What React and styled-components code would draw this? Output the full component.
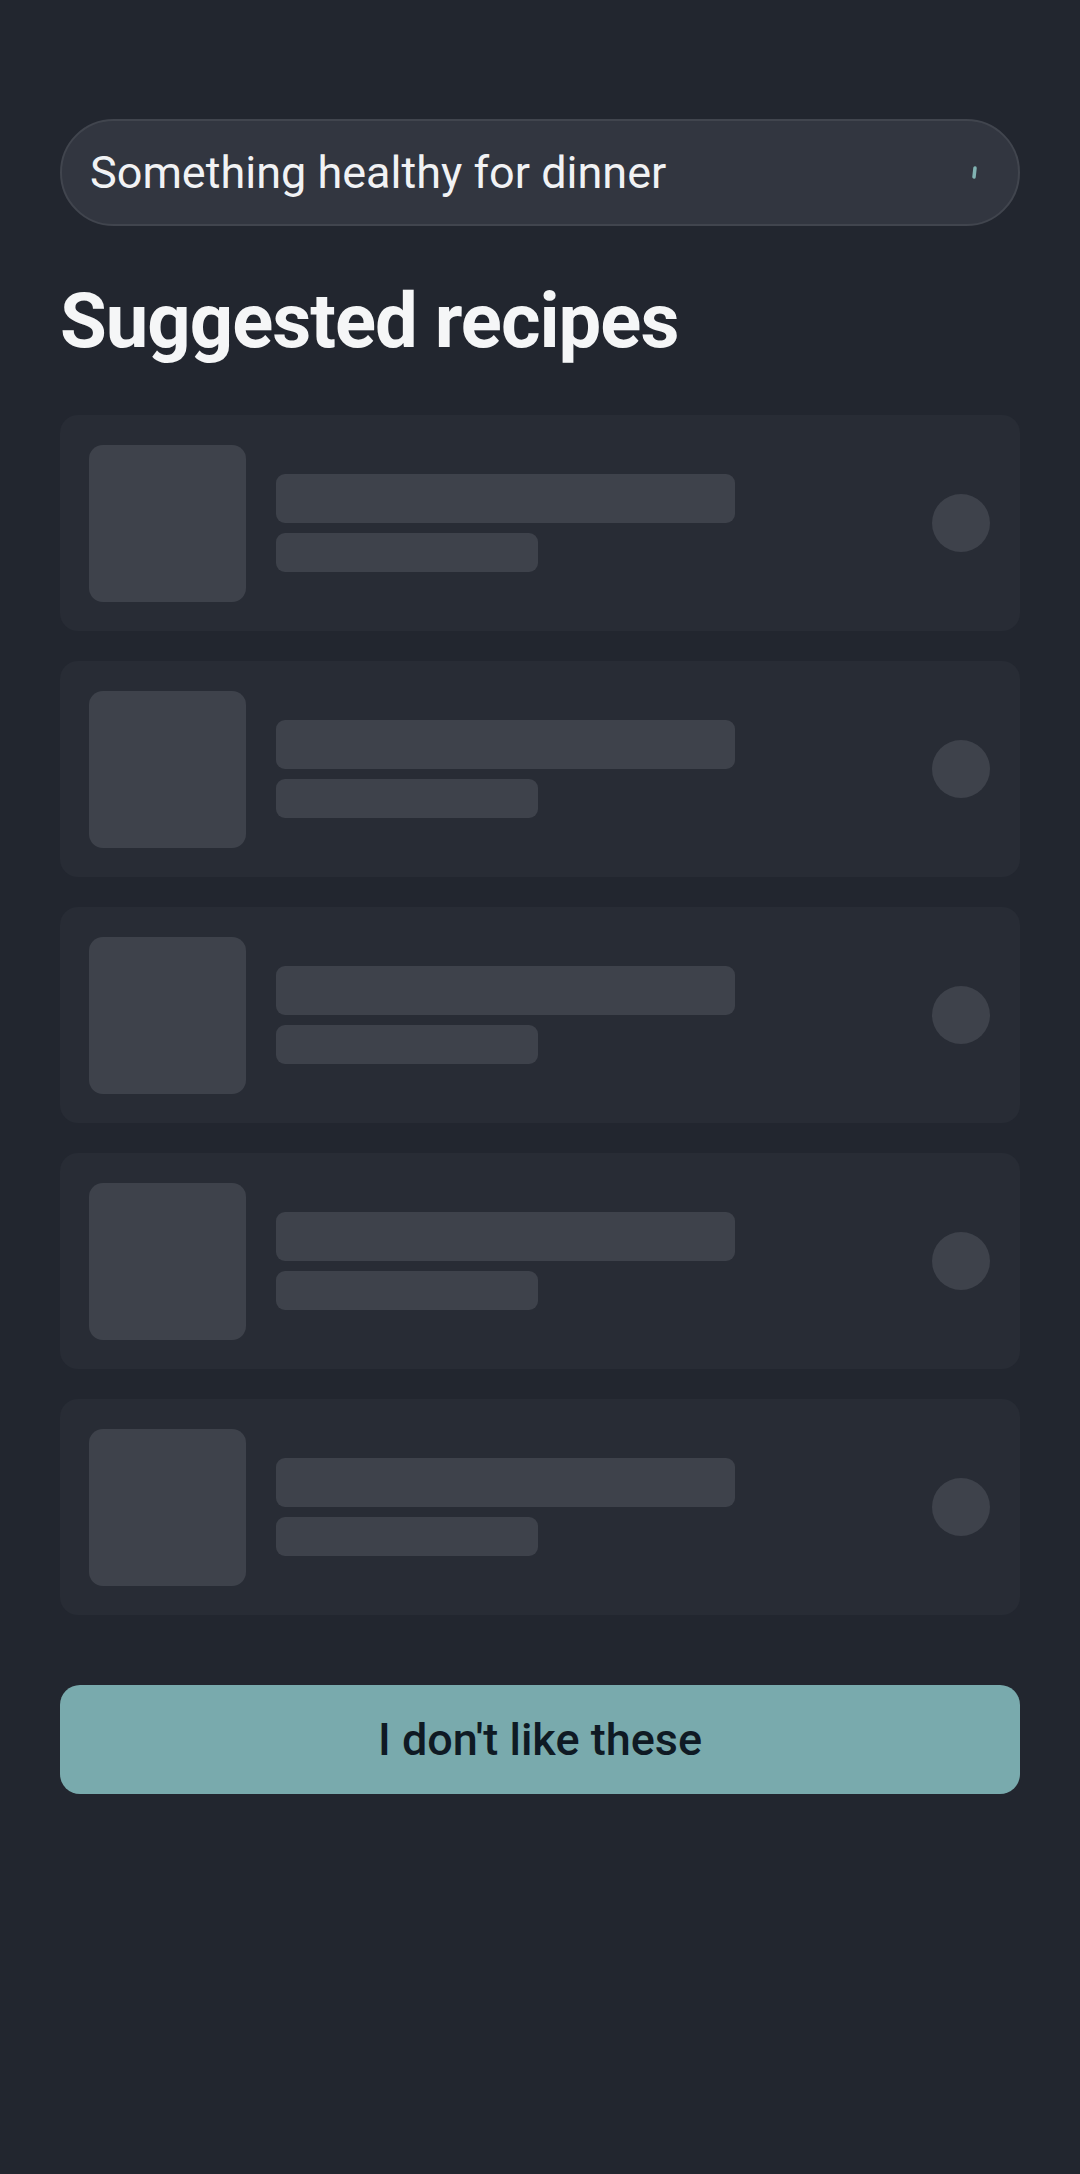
import React from 'react'
import styled, { createGlobalStyle } from 'styled-components'

const GlobalStyle = createGlobalStyle`
  html, body {
    margin: 0;
    padding: 0;
    background: #22262f;
  }
  body {
    font-family: Roboto, "Liberation Sans", sans-serif;
  }
`

const Page = styled.div`
  min-height: 2174px;
  box-sizing: border-box;
  padding: 119px 60px 0;
  background: #22262f;
  display: flex;
  flex-direction: column;
`

const SearchBar = styled.div`
  height: 107px;
  box-sizing: border-box;
  border: 2px solid #41454e;
  border-radius: 54px;
  background: #323640;
  display: flex;
  align-items: center;
  justify-content: space-between;
  padding: 0 34px 0 28px;
`

const SearchText = styled.span`
  color: #f1f2f4;
  font-size: 45px;
  font-weight: 400;
`

const Spinner = styled.svg`
  width: 20px;
  height: 20px;
  flex-shrink: 0;
`

const Title = styled.h1`
  margin: 50px 0 48px;
  color: #f5f6f7;
  font-size: 76px;
  font-weight: 700;
  line-height: 1.2;
  letter-spacing: -1px;
`

const List = styled.div`
  display: flex;
  flex-direction: column;
  gap: 30px;
`

const Card = styled.div`
  height: 216px;
  box-sizing: border-box;
  background: #282c35;
  border-radius: 18px;
  padding: 0 30px 0 29px;
  display: flex;
  align-items: center;
`

const Thumb = styled.div`
  width: 157px;
  height: 157px;
  border-radius: 14px;
  background: #3e424b;
  flex-shrink: 0;
`

const Lines = styled.div`
  display: flex;
  flex-direction: column;
  gap: 10px;
  margin-left: 30px;
  flex: 1;
`

const Bar = styled.div`
  width: ${p => p.$w}px;
  height: ${p => p.$h}px;
  border-radius: 9px;
  background: #3e424b;
`

const Dot = styled.div`
  width: 58px;
  height: 58px;
  border-radius: 50%;
  background: #3e424b;
  flex-shrink: 0;
`

const Button = styled.button`
  margin-top: 70px;
  height: 109px;
  border: none;
  border-radius: 20px;
  background: #79aaad;
  color: #0f1a24;
  font-family: Roboto, "Liberation Sans", sans-serif;
  font-size: 45px;
  font-weight: 500;
  cursor: pointer;
`

export default function App() {
  const cards = [1, 2, 3, 4, 5]
  return (
    <>
      <GlobalStyle />
      <Page>
        <SearchBar>
          <SearchText>Something healthy for dinner</SearchText>
          <Spinner viewBox="0 0 20 20">
            <path d="M11 5 L10 14" stroke="#8fc9c6" strokeWidth="3.5" strokeLinecap="round" opacity="0.85" />
          </Spinner>
        </SearchBar>
        <Title>Suggested recipes</Title>
        <List>
          {cards.map(i => (
            <Card key={i}>
              <Thumb />
              <Lines>
                <Bar $w={459} $h={49} />
                <Bar $w={262} $h={39} />
              </Lines>
              <Dot />
            </Card>
          ))}
        </List>
        <Button>I don't like these</Button>
      </Page>
    </>
  )
}
